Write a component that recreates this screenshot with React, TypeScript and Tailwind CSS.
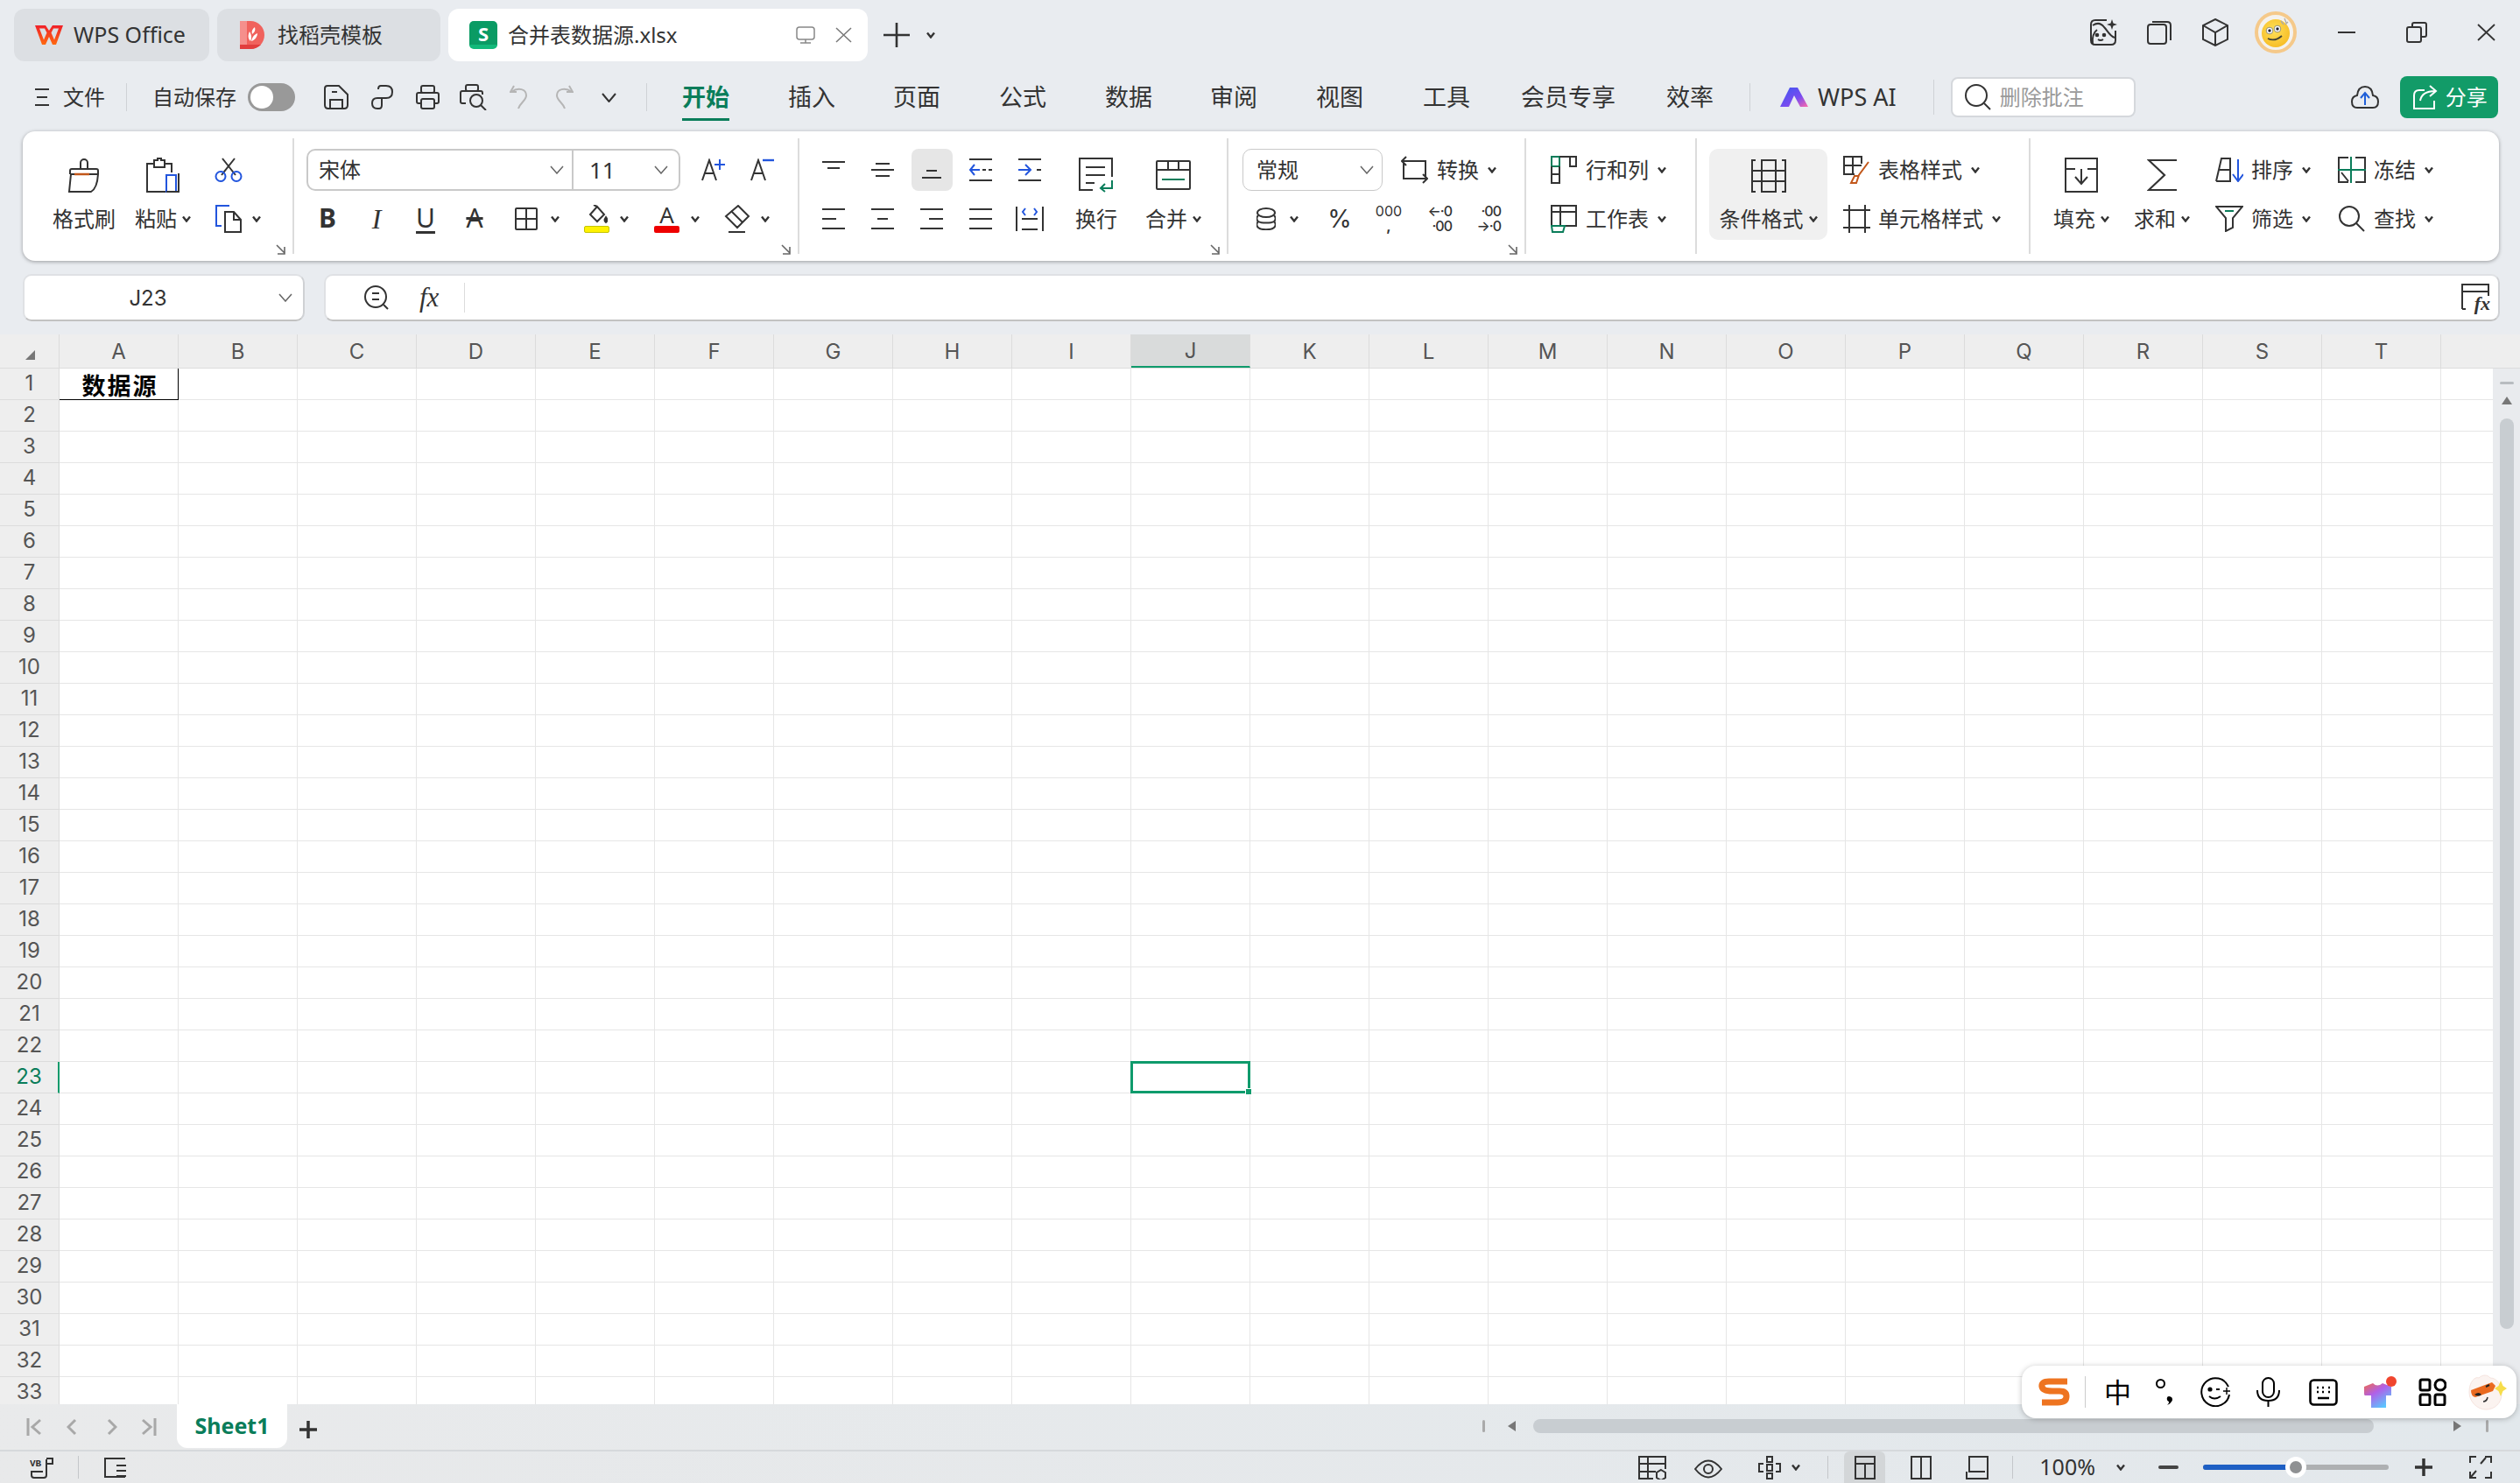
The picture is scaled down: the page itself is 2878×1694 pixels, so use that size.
import type { ReactNode } from "react";

const cols = "ABCDEFGHIJKLMNOPQRST".split("");
const rows = Array.from({ length: 33 }, (_, i) => i + 1);

type IconProps = { w: number; h: number; children: ReactNode; className?: string; sw?: number };

function Ic({ w, h, children, className = "", sw = 2 }: IconProps) {
  return (
    <svg
      width={w}
      height={h}
      viewBox={`0 0 ${w} ${h}`}
      fill="none"
      stroke="currentColor"
      strokeWidth={sw}
      className={`block shrink-0 ${className}`}
    >
      {children}
    </svg>
  );
}

function Chev({ className = "" }: { className?: string }) {
  return (
    <Ic w={10} h={8} sw={2.4} className={className}>
      <path d="M1 1.5 5 6.5 9 1.5" />
    </Ic>
  );
}

function ComboChev({ className = "" }: { className?: string }) {
  return (
    <Ic w={16} h={10} sw={1.5} className={`text-[#666] ${className}`}>
      <path d="M1 1 8 9 15 1" />
    </Ic>
  );
}

function Launcher() {
  return (
    <Ic w={11} h={12} sw={1.6} className="absolute bottom-[7px] right-[8px] text-[#666]">
      <path d="M1 1 10 10M10 3V11H2" />
    </Ic>
  );
}

function Sep() {
  return <div className="mt-[8px] h-[132px] w-[2px] shrink-0 bg-[#dcdcdc]" />;
}

function Big({ icon, label, chev, className = "" }: { icon: ReactNode; label: string; chev?: boolean; className?: string }) {
  return (
    <div className={`flex shrink-0 flex-col items-center ${className}`}>
      <div className="flex h-[40px] items-center justify-center">{icon}</div>
      <div className="mt-[14px] flex h-[32px] items-center gap-[6px] text-[24px] whitespace-nowrap">
        {label}
        {chev && <Chev />}
      </div>
    </div>
  );
}

function IconRow({ icon, label, className = "" }: { icon: ReactNode; label: string; className?: string }) {
  return (
    <div className={`flex h-[48px] items-center ${className}`}>
      <div className="flex w-[31px] justify-center">{icon}</div>
      <span className="ml-[9px] text-[24px] whitespace-nowrap">{label}</span>
      <Chev className="ml-[10px]" />
    </div>
  );
}

function AlignLines({ y, x }: { y: number[]; x: [number, number][] }) {
  return (
    <Ic w={28} h={26}>
      {y.map((v, i) => (
        <path key={i} d={`M${x[i][0]} ${v}H${x[i][1]}`} />
      ))}
    </Ic>
  );
}

function Slot56({ children, active }: { children: ReactNode; active?: boolean }) {
  return (
    <div className="flex h-[48px] w-[56px] shrink-0 items-center justify-center">
      <div className={`flex h-[48px] w-[47px] items-center justify-center rounded-[8px] ${active ? "bg-[#e6e6e6]" : ""}`}>
        {children}
      </div>
    </div>
  );
}

function TitleBar() {
  return (
    <div className="flex h-[72px] shrink-0 items-start pt-[10px] pl-[16px]">
      <div className="flex h-[60px] w-[223px] items-center rounded-[12px] bg-[#dcdfe3] pl-[24px]">
        <svg width="32" height="22" viewBox="0 0 32 22" className="block shrink-0">
          <defs>
            <linearGradient id="wpsG" x1="0" y1="0" x2="0" y2="1">
              <stop offset="0" stopColor="#f0202a" />
              <stop offset="1" stopColor="#ff6a10" />
            </linearGradient>
          </defs>
          <path
            fillRule="evenodd"
            d="M0 0H12L16 6 20 0H32L24 22H20L16 13 12 22H8ZM5 3.5 10 16.5 13.5 8.5 11 3.5ZM27 3.5H21L18.5 8.5 22 16.5Z"
            fill="url(#wpsG)"
          />
        </svg>
        <span className="ml-[12px] text-[25px]">WPS Office</span>
      </div>
      <div className="ml-[9px] flex h-[60px] w-[255px] items-center rounded-[12px] bg-[#dcdfe3] pl-[26px]">
        <svg width="28" height="32" viewBox="0 0 28 32" className="block shrink-0">
          <path d="M0 0H12C21 0 28 7 28 16S21 32 12 32H0Z" fill="#f0625d" />
          <path d="M0 0H8V27H0Z" fill="#f58f8c" />
          <path d="M0 27H24Q19 32 12 32H0Z" fill="#e23e3e" />
          <path d="M12 23C9 20 9 16 11 12 13 15 14 19 12 23ZM13 23C14 18 17 15 20 14 20 18 17 22 13 23ZM14 15C13 12 14 9 17 7 18 10 17 13 14 15Z" fill="#fff" />
        </svg>
        <span className="ml-[15px] text-[24px]">找稻壳模板</span>
      </div>
      <div className="ml-[9px] flex h-[60px] w-[479px] items-center rounded-[12px] bg-white pl-[24px]">
        <div className="flex h-[32px] w-[32px] items-center justify-center rounded-[5px] border-b-[5px] border-[#12b97a] bg-[#0a9b64] text-[22px] font-bold leading-none text-white">
          S
        </div>
        <span className="ml-[12px] text-[24px]">合并表数据源.xlsx</span>
        <Ic w={22} h={20} sw={1.5} className="ml-[135px] text-[#888]">
          <rect x="1" y="1" width="20" height="14" rx="3" />
          <path d="M11 15V19M5 19H17" />
        </Ic>
        <Ic w={19} h={18} sw={1.5} className="ml-[23px] text-[#777]">
          <path d="M1 1 18 17M18 1 1 17" />
        </Ic>
      </div>
      <Ic w={30} h={28} sw={2.6} className="mt-[16px] ml-[18px]">
        <path d="M15 0V28M0 14H30" />
      </Ic>
      <Chev className="mt-[26px] ml-[19px]" />
      <div className="ml-auto flex h-[54px] items-center">
        <Ic w={32} h={32}>
          <path d="M20 2H7Q2 2 2 7V25Q2 30 7 30H25Q30 30 30 25V14" />
          <path d="M4 8C10 4 14 6 17 10 21 14 23 20 29 22" />
          <path d="M4 30C3 22 5 16 9 13" />
          <circle cx="9" cy="19" r="1.3" fill="currentColor" />
          <circle cx="17" cy="19" r="1.3" fill="currentColor" />
          <path d="M10 24Q13 26 16 24" />
          <path d="M26 1 27.5 5.5 32 7 27.5 8.5 26 13 24.5 8.5 20 7 24.5 5.5Z" fill="currentColor" stroke="none" />
        </Ic>
        <Ic w={28} h={28} className="ml-[34px]">
          <rect x="1" y="5" width="21" height="22" rx="3" />
          <path d="M6 2H23Q27 2 27 6V23" />
        </Ic>
        <Ic w={30} h={32} className="ml-[35px]">
          <path d="M15 1 29 8V24L15 31 1 24V8Z" />
          <path d="M1 8 15 16 29 8M15 16V31" />
        </Ic>
        <svg width="48" height="48" viewBox="0 0 48 48" className="ml-[30px] block shrink-0">
          <defs>
            <radialGradient id="faceG" cx="0.45" cy="0.4" r="0.7">
              <stop offset="0" stopColor="#ffe15a" />
              <stop offset="1" stopColor="#f6b81e" />
            </radialGradient>
          </defs>
          <circle cx="24" cy="24" r="22" fill="#f4f2ee" stroke="#f5c98a" strokeWidth="4" />
          <circle cx="24" cy="25" r="16" fill="url(#faceG)" />
          <circle cx="17" cy="22" r="3.8" fill="#fff" stroke="#776" strokeWidth="0.8" />
          <circle cx="26" cy="20" r="3.8" fill="#fff" stroke="#776" strokeWidth="0.8" />
          <circle cx="17" cy="22" r="1.7" fill="#223" />
          <circle cx="26" cy="20" r="1.7" fill="#223" />
          <path d="M15 31Q23 35 31 28" fill="none" stroke="#443" strokeWidth="1.8" />
          <path d="M30 11 33 15M34 8 36 13M38 12 35 15" stroke="#aaa" strokeWidth="1.3" />
        </svg>
        <Ic w={20} h={4} className="ml-[47px]">
          <path d="M0 2H20" />
        </Ic>
        <Ic w={24} h={24} className="ml-[58px]">
          <rect x="1" y="6" width="16" height="17" rx="2" />
          <path d="M7 6V3Q7 1 9 1H21Q23 1 23 3V15Q23 17 21 17H17" />
        </Ic>
        <Ic w={21} h={20} sw={1.8} className="mr-[28px] ml-[57px]">
          <path d="M1 1 20 19M20 1 1 19" />
        </Ic>
      </div>
    </div>
  );
}

const menuItems = [
  { label: "插入", cls: "ml-[67px]" },
  { label: "页面", cls: "ml-[66px]" },
  { label: "公式", cls: "ml-[67px]" },
  { label: "数据", cls: "ml-[67px]" },
  { label: "审阅", cls: "ml-[66px]" },
  { label: "视图", cls: "ml-[67px]" },
  { label: "工具", cls: "ml-[68px]" },
  { label: "会员专享", cls: "ml-[58px]" },
  { label: "效率", cls: "ml-[58px]" },
];

function MenuBar() {
  return (
    <div className="flex h-[78px] shrink-0 items-center pl-[40px]">
      <Ic w={16} h={22}>
        <path d="M0 2H16M2 11H14M0 20H16" />
      </Ic>
      <span className="ml-[16px] text-[24px]">文件</span>
      <div className="ml-[24px] h-[32px] w-[1px] bg-[#cfd2d6]" />
      <span className="ml-[29px] text-[24px]">自动保存</span>
      <div className="ml-[13px] flex h-[32px] w-[54px] items-center rounded-full bg-[#999] pl-[3px]">
        <div className="h-[26px] w-[26px] rounded-full bg-white" />
      </div>
      <Ic w={28} h={28} className="ml-[33px]">
        <path d="M4 1H17L27 11V23Q27 27 23 27H5Q1 27 1 23V4Q1 1 4 1Z" />
        <path d="M7 27V17H21V27M9 8H15" />
      </Ic>
      <Ic w={25} h={28} className="ml-[26px]">
        <path d="M12 19V15H17Q24 15 24 8T17 1H11Q8 1 8 5" />
        <path d="M12 15H7Q1 15 1 21T7 27H9Q12 27 12 23V19" />
      </Ic>
      <Ic w={27} h={28} className="ml-[26px]">
        <rect x="6" y="1" width="15" height="8" rx="2" />
        <path d="M6 21H3Q1 21 1 19V11Q1 9 3 9H24Q26 9 26 11V19Q26 21 24 21H21" />
        <rect x="6" y="16" width="15" height="11" rx="2" />
      </Ic>
      <Ic w={31} h={30} className="ml-[23px]">
        <rect x="7" y="1" width="14" height="7" rx="2" />
        <path d="M7 22H3Q1 22 1 20V10Q1 8 3 8H24Q26 8 26 10V12" />
        <circle cx="19" cy="19" r="7" />
        <path d="M24 24 30 30" />
      </Ic>
      <Ic w={20} h={28} className="ml-[26px] text-[#b5b5b5]">
        <path d="M5 1 1 8 8 8" />
        <path d="M2 8C10 2 19 5 19 12 19 18 12 20 10 27" />
      </Ic>
      <Ic w={21} h={28} className="ml-[32px] text-[#b5b5b5]">
        <path d="M16 1 20 8 13 8" />
        <path d="M19 8C11 2 2 5 2 12 2 18 9 20 11 27" />
      </Ic>
      <Ic w={17} h={11} className="ml-[32px]">
        <path d="M1 1 8.5 10 16 1" />
      </Ic>
      <div className="ml-[34px] h-[32px] w-[1px] bg-[#cfd2d6]" />
      <div className="ml-[40px] flex h-[54px] items-center border-b-[3px] border-[#0a7d5a] pt-[3px] text-[27px] font-bold text-[#0a7d5a]">
        开始
      </div>
      {menuItems.map((m) => (
        <span key={m.label} className={`text-[27px] ${m.cls}`}>
          {m.label}
        </span>
      ))}
      <div className="ml-[41px] h-[32px] w-[1px] bg-[#cfd2d6]" />
      <svg width="32" height="22" viewBox="0 0 32 22" className="ml-[34px] block shrink-0">
        <defs>
          <linearGradient id="aiG" x1="0" y1="0" x2="1" y2="1">
            <stop offset="0" stopColor="#3a57f0" />
            <stop offset="0.6" stopColor="#7a4cf0" />
            <stop offset="1" stopColor="#ff6aa8" />
          </linearGradient>
        </defs>
        <path d="M11 0H20L32 22H23L16 9 10 22H0Z" fill="url(#aiG)" />
      </svg>
      <span className="ml-[11px] text-[27px]">WPS AI</span>
      <div className="ml-[42px] h-[40px] w-[1px] bg-[#cfd2d6]" />
      <div className="ml-[19px] flex h-[46px] w-[211px] items-center rounded-[8px] border-2 border-[#d5d8dc] bg-white pl-[14px]">
        <Ic w={30} h={30}>
          <circle cx="13" cy="13" r="12" />
          <path d="M22 22 29 29" />
        </Ic>
        <span className="ml-[10px] text-[24px] text-[#9a9a9a]">删除批注</span>
      </div>
      <Ic w={32} h={28} className="ml-[246px]">
        <path d="M8 26H7Q1 26 1 19 1 13 7 12 8 2 16 2T25 12Q31 13 31 19 31 26 25 26H8Z" />
        <path d="M16 23V10M11 15 16 9 21 15" stroke="#1f5fd8" />
      </Ic>
      <div className="mr-[24px] ml-[24px] flex h-[48px] w-[112px] items-center rounded-[8px] bg-[#129b68] pl-[15px] text-white">
        <Ic w={28} h={28}>
          <path d="M13 6H7Q1 6 1 12V27H24V18" />
          <path d="M8 18Q10 7 25 7M19 1 26 7 19 13" />
        </Ic>
        <span className="ml-[9px] text-[24px]">分享</span>
      </div>
    </div>
  );
}

function Ribbon() {
  return (
    <div className="mr-[24px] ml-[26px] flex h-[148px] shrink-0 rounded-[14px] bg-white shadow-[0_1px_4px_rgba(0,0,0,0.35)]">
      {/* clipboard */}
      <div className="relative flex w-[308px] shrink-0 pt-[30px]">
        <Big
          className="ml-[34px] w-[72px]"
          label="格式刷"
          icon={
            <Ic w={36} h={40}>
              <path d="M14 13V6A4 4 0 0 1 22 6V13" />
              <path d="M2 19V15Q2 13 4 13H32Q34 13 34 15V19" />
              <path d="M3 19 1 39H26Q33 35 34 19Z" />
              <path d="M7 19H24" stroke="#c2571a" strokeWidth={2.5} />
            </Ic>
          }
        />
        <Big
          className="ml-[22px] w-[64px]"
          label="粘贴"
          chev
          icon={
            <Ic w={40} h={40}>
              <path d="M11 7H2V39H24" />
              <path d="M30 17V7H21" />
              <path d="M10 11V3H14V1H18V3H22V11Z" />
              <rect x="24" y="20" width="11" height="19" stroke="#2255dd" />
              <path d="M38 18V39H24" />
            </Ic>
          }
        />
        <div className="ml-[27px] flex flex-col">
          <Ic w={32} h={28} className="h-[28px]">
            <path d="M9 1 24 20M23 1 8 20" />
            <circle cx="7" cy="21.5" r="5.5" stroke="#2255dd" />
            <circle cx="25" cy="21.5" r="5.5" stroke="#2255dd" />
          </Ic>
          <div className="mt-[26px] flex h-[32px] items-center">
            <Ic w={32} h={32}>
              <path d="M17 1H2V24H8" stroke="#2255dd" />
              <path d="M12 8H22L30 17V31H12Z" />
              <path d="M22 8V17H30" />
            </Ic>
            <Chev className="ml-[11px]" />
          </div>
        </div>
        <Launcher />
      </div>
      <Sep />
      {/* font */}
      <div className="relative w-[575px] shrink-0 pt-[20px]">
        <div className="flex h-[48px] items-center">
          <div className="ml-[14px] flex h-[48px] w-[427px] items-center rounded-[10px] border-2 border-[#c9c9c9] pl-[12px] text-[24px]">
            <span className="w-[264px]">宋体</span>
            <ComboChev />
            <div className="ml-[9px] h-full w-[2px] bg-[#c9c9c9]" />
            <span className="ml-[18px] w-[74px] text-[26px]">11</span>
            <ComboChev />
          </div>
          <Ic w={28} h={26} className="ml-[24px]">
            <path d="M1 25 9 2 17 25M4 17H14" />
            <path d="M21 1V13M15 7H27" stroke="#2255dd" />
          </Ic>
          <Ic w={28} h={26} className="ml-[28px]">
            <path d="M1 25 9 2 17 25M4 17H14" />
            <path d="M14 2H27" stroke="#2255dd" strokeWidth={2.4} />
          </Ic>
        </div>
        <div className="mt-[8px] flex h-[48px] items-center">
          <div className="ml-[10px] flex w-[224px] shrink-0 text-[30px] leading-none">
            <span className="w-[56px] text-center font-bold">B</span>
            <span className="w-[56px] text-center font-['Liberation_Serif',serif] text-[32px] italic">I</span>
            <span className="w-[56px] text-center underline underline-offset-4">U</span>
            <span className="w-[56px] text-center line-through">A</span>
          </div>
          <Ic w={26} h={26} className="ml-[18px]">
            <rect x="1" y="1" width="24" height="24" rx="1" />
            <path d="M13 1V25M1 13H25" />
          </Ic>
          <Chev className="ml-[15px]" />
          <div className="ml-[28px] flex w-[29px] flex-col items-center">
            <Ic w={24} h={22}>
              <path d="M12 2 4 11 12 19 20 11 12 2ZM12 2 8 0" />
              <path d="M22 14Q25 18 22 20 19 18 22 14Z" fill="currentColor" />
            </Ic>
            <div className="mt-[2px] h-[8px] w-[29px] rounded-[2px] border border-[#c4c400] bg-[#fff200]" />
          </div>
          <Chev className="ml-[12px]" />
          <div className="ml-[29px] flex w-[29px] flex-col items-center">
            <span className="h-[22px] text-[26px] leading-[22px]">A</span>
            <div className="mt-[2px] h-[8px] w-[29px] rounded-[2px] bg-[#ee0000]" />
          </div>
          <Chev className="ml-[13px]" />
          <Ic w={30} h={32} className="ml-[28px]">
            <path d="M16 1 28 13 15 26 2 13Z" />
            <path d="M8 7 21 20" />
            <path d="M5 31H24" />
          </Ic>
          <Chev className="ml-[12px]" />
        </div>
        <Launcher />
      </div>
      <Sep />
      {/* alignment */}
      <div className="relative flex w-[488px] shrink-0 pt-[20px]">
        <div className="ml-[11px] w-[280px] shrink-0">
          <div className="flex h-[48px] items-center">
            <Slot56>
              <Ic w={28} h={16} className="mb-[6px]">
                <path d="M1 2H27M7 9H21" />
              </Ic>
            </Slot56>
            <Slot56>
              <AlignLines y={[6, 13, 20]} x={[[6, 22], [1, 27], [6, 22]]} />
            </Slot56>
            <Slot56 active>
              <Ic w={24} h={16} className="mt-[14px]">
                <path d="M6 2H18M1 10H23" />
              </Ic>
            </Slot56>
            <Slot56>
              <Ic w={28} h={26}>
                <path d="M1 1H27M16 13H20M23 13H27M1 25H27" />
                <path d="M13 13H2M7 7 2 13 7 19" stroke="#2255dd" />
              </Ic>
            </Slot56>
            <Slot56>
              <Ic w={28} h={26}>
                <path d="M1 1H27M22 13H27M1 25H27" />
                <path d="M1 13H14M9 7 15 13 9 19" stroke="#2255dd" />
              </Ic>
            </Slot56>
          </div>
          <div className="mt-[8px] flex h-[48px] items-center">
            <Slot56>
              <AlignLines y={[2, 13, 24]} x={[[1, 27], [1, 17], [1, 27]]} />
            </Slot56>
            <Slot56>
              <AlignLines y={[2, 13, 24]} x={[[1, 27], [8, 20], [1, 27]]} />
            </Slot56>
            <Slot56>
              <AlignLines y={[2, 13, 24]} x={[[1, 27], [11, 27], [1, 27]]} />
            </Slot56>
            <Slot56>
              <AlignLines y={[2, 13, 24]} x={[[1, 27], [1, 27], [1, 27]]} />
            </Slot56>
            <Slot56>
              <Ic w={32} h={28}>
                <path d="M1 0V28M31 0V28M7 14H25M7 26H25" />
                <path d="M11 2 8 6 11 10M21 2 24 6 21 10" stroke="#2255dd" />
              </Ic>
            </Slot56>
          </div>
        </div>
        <div className="flex flex-col pt-[10px]">
          <Big
            className="ml-[8px] w-[80px]"
            label="换行"
            icon={
              <Ic w={40} h={40}>
                <path d="M38 22V1H1V37H16" />
                <path d="M8 11H30M8 20H30M8 29H18" />
                <path d="M38 26V35H26M30 30 25 35 30 39" stroke="#0a7d5a" />
              </Ic>
            }
          />
        </div>
        <div className="flex flex-col pt-[10px]">
          <Big
            className="ml-[3px] w-[90px]"
            label="合并"
            chev
            icon={
              <Ic w={40} h={34}>
                <rect x="1" y="1" width="38" height="32" rx="1" />
                <path d="M1 11H39M14 1V11M26 1V11" />
                <path d="M7 22H33" stroke="#0a7d5a" />
              </Ic>
            }
          />
        </div>
        <Launcher />
      </div>
      <Sep />
      {/* number */}
      <div className="relative w-[338px] shrink-0 pt-[20px]">
        <div className="flex h-[48px] items-center">
          <div className="ml-[16px] flex h-[48px] w-[160px] items-center rounded-[10px] border border-[#c9c9c9] pl-[15px] text-[24px]">
            <span className="w-[118px]">常规</span>
            <ComboChev />
          </div>
          <Ic w={31} h={32} className="ml-[21px]">
            <path d="M6 1 1 6 6 11M1 6H28V24" />
            <path d="M25 31 30 26 25 21M30 26H3V8" />
          </Ic>
          <span className="ml-[10px] text-[24px]">转换</span>
          <Chev className="ml-[10px]" />
        </div>
        <div className="mt-[8px] flex h-[48px] items-center">
          <Ic w={22} h={26} className="ml-[32px]">
            <ellipse cx="11" cy="6" rx="10" ry="5" />
            <path d="M2 9C0 11 0 14 2 16 5 18 17 18 20 16 22 14 22 11 20 9" />
            <path d="M2 16C0 18 0 21 2 23 5 26 17 26 20 23 22 21 22 18 20 16" />
          </Ic>
          <Chev className="ml-[16px]" />
          <div className="ml-[19px] flex h-[48px] w-[224px] items-center font-['Inter',sans-serif] text-[16px]">
            <span className="w-[56px] text-center text-[28px] leading-none font-normal">%</span>
            <span className="flex h-[34px] w-[56px] flex-col items-center leading-[17px]">
              <span>000</span>
              <span className="font-bold">,</span>
            </span>
            <span className="flex h-[34px] w-[56px] flex-col items-center leading-[17px] tracking-[-1px]">
              <span className="w-[32px] text-right font-medium">←·0</span>
              <span className="w-[32px] text-right font-medium">·00</span>
            </span>
            <span className="flex h-[34px] w-[56px] flex-col items-center leading-[17px] tracking-[-1px]">
              <span className="w-[32px] text-right font-medium">·00</span>
              <span className="w-[32px] text-right font-medium">→·0</span>
            </span>
          </div>
        </div>
        <Launcher />
      </div>
      <Sep />
      {/* cells */}
      <div className="w-[193px] shrink-0 pt-[20px] pl-[28px]">
        <div className="flex h-[48px] items-center">
          <Ic w={30} h={32}>
            <rect x="1" y="1" width="9" height="11" stroke="#0a7d5a" />
            <path d="M10 1H29V12H22V1M1 12V31H10V12M1 21H10" />
          </Ic>
          <span className="ml-[10px] text-[24px]">行和列</span>
          <Chev className="ml-[10px]" />
        </div>
        <div className="mt-[8px] flex h-[48px] items-center">
          <Ic w={30} h={32}>
            <path d="M1 23V1H29V24H14M1 8H29M11 1V23" />
            <path d="M1 24H16L14 31H2Z" stroke="#0a7d5a" />
          </Ic>
          <span className="ml-[10px] text-[24px]">工作表</span>
          <Chev className="ml-[10px]" />
        </div>
      </div>
      <Sep />
      {/* styles */}
      <div className="flex w-[379px] shrink-0 pt-[20px]">
        <div className="ml-[14px] flex h-[104px] w-[135px] shrink-0 flex-col items-center rounded-[10px] bg-[#f0f0f0] pt-[12px]">
          <Ic w={40} h={38}>
            <path d="M5 1H1V37H5M35 1H39V37H35" />
            <path d="M12 1H28V13H12ZM1 13H12M28 13H39M12 13V25H28V13M1 25H12M28 25H39M12 25V37H28V25" />
          </Ic>
          <div className="mt-[14px] flex h-[32px] items-center gap-[6px] text-[24px]">
            条件格式
            <Chev />
          </div>
        </div>
        <div className="ml-[18px]">
          <IconRow
            label="表格样式"
            icon={
              <Ic w={31} h={32}>
                <path d="M21 9V1H1V21H13M1 11H21M11 1V21" />
                <path d="M29 7 18 22 15 31H9L13 23H18" stroke="#c2571a" />
              </Ic>
            }
          />
          <IconRow
            className="mt-[8px]"
            label="单元格样式"
            icon={
              <Ic w={31} h={32}>
                <path d="M7 0V32M25 0V32M0 6H31M0 26H31" />
              </Ic>
            }
          />
        </div>
      </div>
      <Sep />
      {/* editing */}
      <div className="flex shrink-0 pt-[30px]">
        <Big
          className="ml-[18px] w-[80px]"
          label="填充"
          chev
          icon={
            <Ic w={38} h={40}>
              <rect x="1" y="1" width="36" height="38" />
              <path d="M1 13H12M26 13H37" />
              <path d="M19 13V29M12 22 19 30 26 22" />
            </Ic>
          }
        />
        <Big
          className="ml-[12px] w-[80px]"
          label="求和"
          chev
          icon={
            <Ic w={34} h={36} sw={2.2}>
              <path d="M34 1H2L20 18 2 35H34" />
            </Ic>
          }
        />
        <div className="-mt-[10px]">
          <div className="ml-[21px] flex h-[48px] items-center">
            <Ic w={32} h={28}>
              <path d="M1 27 7 1H17V27H1M5 14H17" />
              <path d="M26 2V26M20 19 26 27 32 19" stroke="#2255dd" />
            </Ic>
            <span className="ml-[9px] text-[24px]">排序</span>
            <Chev className="ml-[10px]" />
          </div>
          <div className="mt-[8px] ml-[21px] flex h-[48px] items-center">
            <Ic w={32} h={30}>
              <path d="M1 1H31L20 14V25L12 29V14Z" />
              <path d="M11 6H21" stroke="#0a7d5a" />
            </Ic>
            <span className="ml-[9px] text-[24px]">筛选</span>
            <Chev className="ml-[10px]" />
          </div>
        </div>
        <div className="-mt-[10px]">
          <div className="ml-[31px] flex h-[48px] items-center">
            <Ic w={32} h={30}>
              <path d="M12 1H1V29H12M20 1H31V29H20M1 15H2M4 18 12 28" />
              <path d="M15 0V30M0 15H32" stroke="#0a7d5a" />
            </Ic>
            <span className="ml-[9px] text-[24px]">冻结</span>
            <Chev className="ml-[10px]" />
          </div>
          <div className="mt-[8px] ml-[31px] flex h-[48px] items-center">
            <Ic w={32} h={30}>
              <circle cx="13" cy="12" r="11" />
              <path d="M21 20 30 29" />
            </Ic>
            <span className="ml-[9px] text-[24px]">查找</span>
            <Chev className="ml-[10px]" />
          </div>
        </div>
      </div>
    </div>
  );
}

function FormulaBar() {
  return (
    <div className="mt-[15px] mr-[23px] ml-[26px] flex h-[54px] shrink-0 gap-[22px]">
      <div className="flex w-[322px] items-center rounded-[10px] border-2 border-t-[#dfe1e4] border-r-[#cfd1d4] border-b-[#c2c2c2] border-l-[#dfe1e4] bg-white">
        <span className="w-[282px] pt-[2px] text-center font-['Inter',sans-serif] text-[24px]">J23</span>
        <ComboChev className="ml-[8px]" />
      </div>
      <div className="flex flex-1 items-center rounded-[10px] border-2 border-t-[#dfe1e4] border-r-[#cfd1d4] border-b-[#c2c2c2] border-l-[#dfe1e4] bg-white pl-[44px]">
        <Ic w={28} h={28}>
          <circle cx="13" cy="13" r="12" />
          <path d="M22 22 27 27M9 9H17M9 16H17" />
        </Ic>
        <span className="ml-[35px] w-[27px] font-['Liberation_Serif',serif] text-[31px] italic">fx</span>
        <div className="ml-[24px] h-[34px] w-[1px] bg-[#dcdcdc]" />
        <div className="relative mr-[10px] ml-auto h-[32px] w-[32px]">
          <Ic w={32} h={32}>
            <path d="M1 29V1H31V14M1 9H31M1 29H5" />
          </Ic>
          <span className="absolute -right-[1px] -bottom-[2px] font-['Liberation_Serif',serif] text-[22px] leading-none font-bold italic">
            fx
          </span>
        </div>
      </div>
    </div>
  );
}

function Grid() {
  return (
    <div className="mt-[15px] flex min-h-0 flex-1 flex-col overflow-hidden font-['Inter',sans-serif]">
      <div className="flex h-[39px] shrink-0 border-b border-[#dcdcdc] bg-[#eeeeee]">
        <div className="flex w-[68px] shrink-0 items-center justify-center border-r border-[#dcdcdc] pt-[8px] pl-[2px]">
          <div className="h-0 w-0 border-b-[11px] border-l-[11px] border-b-[#777] border-l-transparent" />
        </div>
        {cols.map((c) => (
          <div
            key={c}
            className={`flex w-[136px] shrink-0 items-center justify-center border-r border-[#dcdcdc] pt-[2px] text-[24px] text-[#555] ${
              c === "J" ? "border-b-2 border-b-[#0f9b6c] bg-[#d9dbdb] text-[#333]" : ""
            }`}
          >
            {c}
          </div>
        ))}
      </div>
      <div className="flex min-h-0 flex-1">
        <div className="min-w-0 flex-1 overflow-hidden bg-white">
          {rows.map((r) => (
            <div key={r} className="flex h-[36px]">
              <div
                className={`flex w-[68px] shrink-0 items-center justify-center border-r border-b border-[#dcdcdc] bg-[#eeeeee] pb-[1px] text-[24px] leading-none ${
                  r === 23 ? "border-r-2 border-r-[#0f9b6c] bg-[#d9dbdb] text-[#0a7d5a]" : "text-[#555]"
                }`}
              >
                {r}
              </div>
              {cols.map((c) => (
                <div
                  key={c}
                  className={`relative flex w-[136px] shrink-0 items-center justify-center border-r border-b ${
                    r === 1 && c === "A" ? "border-black" : "border-[#e6e6e6]"
                  }`}
                >
                  {r === 1 && c === "A" && (
                    <span className="pt-[2px] pl-[3px] font-['Noto_Sans_CJK_SC',sans-serif] text-[27px] leading-none font-bold tracking-[2px] text-black">
                      数据源
                    </span>
                  )}
                  {r === 23 && c === "J" && (
                    <div className="absolute -top-[1px] -left-[1px] z-10 h-[37px] w-[137px] border-[3px] border-[#0f9b6c]">
                      <div className="absolute -right-[4px] -bottom-[4px] h-[6px] w-[6px] bg-[#0f9b6c] outline outline-white" />
                    </div>
                  )}
                </div>
              ))}
              <div className="flex-1 border-b border-[#e6e6e6]" />
            </div>
          ))}
        </div>
        <div className="flex w-[31px] shrink-0 flex-col items-center bg-[#e9ebee] pt-[15px]">
          <div className="h-[3px] w-[16px] rounded-full bg-[#b8bcc0]" />
          <div className="mt-[14px] h-0 w-0 border-r-[6px] border-b-[9px] border-l-[6px] border-r-transparent border-b-[#777] border-l-transparent" />
          <div className="mt-[16px] h-[1040px] w-[16px] rounded-full bg-[#c8cdd1]" />
        </div>
      </div>
    </div>
  );
}

function SheetBar() {
  return (
    <div className="flex h-[52px] shrink-0 bg-linear-to-r from-[#e9eaeb] to-[#e2e8ec]">
      <div className="flex h-[20px] items-center self-center pl-[30px] text-[#a8a8a8]">
        <Ic w={18} h={20} sw={3}>
          <path d="M2 0V20M16 2 7 10 16 18" />
        </Ic>
        <Ic w={12} h={20} sw={3} className="ml-[28px]">
          <path d="M10 2 2 10 10 18" />
        </Ic>
        <Ic w={12} h={20} sw={3} className="ml-[34px]">
          <path d="M2 2 10 10 2 18" />
        </Ic>
        <Ic w={18} h={20} sw={3} className="ml-[27px]">
          <path d="M16 0V20M2 2 11 10 2 18" />
        </Ic>
      </div>
      <div className="ml-[23px] flex h-[50px] w-[126px] items-center justify-center rounded-b-[12px] bg-white text-[25px] font-bold text-[#0a7d5a]">
        Sheet1
      </div>
      <Ic w={20} h={20} sw={3.5} className="mt-[19px] ml-[14px]">
        <path d="M10 0V20M0 10H20" />
      </Ic>
      <div className="ml-auto flex items-center pb-[2px]">
        <div className="h-[14px] w-[3px] rounded-full bg-[#aaa]" />
        <div className="ml-[26px] h-0 w-0 border-t-[6px] border-r-[9px] border-b-[6px] border-t-transparent border-r-[#777] border-b-transparent" />
        <div className="ml-[20px] h-[16px] w-[960px] rounded-full bg-[#c8cdd1]" />
        <div className="ml-[91px] h-0 w-0 border-t-[6px] border-b-[6px] border-l-[9px] border-t-transparent border-b-transparent border-l-[#777]" />
        <div className="mr-[36px] ml-[28px] h-[14px] w-[3px] rounded-full bg-[#aaa]" />
      </div>
    </div>
  );
}

function StatusBar() {
  return (
    <div className="flex h-[38px] shrink-0 items-center border-t-2 border-[#d6d9dc] bg-linear-to-r from-[#e8e9ea] to-[#e3e8ec] pl-[34px]">
      <svg width="27" height="25" viewBox="0 0 27 25" fill="none" stroke="currentColor" strokeWidth="2" className="block shrink-0">
        <path d="M19 3V21Q19 24 16 24H5Q2 24 2 21V17H15" />
        <path d="M19 2H26V8H19" />
        <text x="0" y="11" fontSize="11" fontWeight="700" fill="currentColor" stroke="none" fontFamily="Liberation Mono">
          VB
        </text>
      </svg>
      <div className="ml-[28px] h-[26px] w-[1px] bg-[#c4c7ca]" />
      <Ic w={25} h={24} className="ml-[29px]">
        <path d="M24 2H1V23H24M14 10H25M14 16H25M14 22H25" />
      </Ic>
      <div className="ml-auto flex h-full items-center">
        <Ic w={32} h={27}>
          <path d="M17 26H1V1H31V15M1 9H31M1 18H20M11 1V26" />
          <path d="M26 16 31 19V25L26 28 21 25V19Z" />
        </Ic>
        <Ic w={32} h={27} className="ml-[32px]">
          <path d="M1 15Q16-4 31 15 16 34 1 15Z" />
          <circle cx="16" cy="15" r="5" />
        </Ic>
        <Ic w={26} h={27} className="ml-[41px]">
          <path d="M10 1H16V7H10ZM10 20H16V26H10ZM6 9H1V18H6M20 9H25V18H20M10 10H16V17H10Z" />
        </Ic>
        <Chev className="ml-[12px]" />
        <div className="ml-[31px] h-[26px] w-[1px] bg-[#c4c7ca]" />
        <div className="ml-[18px] flex h-full w-[47px] items-center justify-center rounded-t-[6px] bg-[#d3d6d8]">
          <Ic w={24} h={27}>
            <rect x="1" y="1" width="22" height="25" />
            <path d="M1 9H23M12 9V26" />
          </Ic>
        </div>
        <Ic w={24} h={27} className="ml-[29px]">
          <rect x="1" y="1" width="22" height="25" />
          <path d="M12 1V26" />
        </Ic>
        <Ic w={26} h={27} className="ml-[39px]">
          <path d="M20 1H4V18H22M20 1H25V26H1V18" />
        </Ic>
        <div className="ml-[27px] h-[26px] w-[1px] bg-[#c4c7ca]" />
        <span className="ml-[30px] text-[25px]">100%</span>
        <Chev className="ml-[24px]" />
        <div className="ml-[38px] h-[4px] w-[23px] rounded bg-[#444]" />
        <div className="relative ml-[28px] flex h-[6px] w-[212px] rounded-full bg-[#aeb0b2]">
          <div className="h-full w-[106px] rounded-full bg-[#1e5fc4]" />
          <div className="absolute top-1/2 left-[94px] flex h-[24px] w-[24px] -translate-y-1/2 items-center justify-center rounded-full bg-white">
            <div className="h-[14px] w-[14px] rounded-full bg-[#8f9193]" />
          </div>
        </div>
        <Ic w={20} h={20} sw={3.5} className="ml-[30px]">
          <path d="M10 0V20M0 10H20" />
        </Ic>
        <Ic w={26} h={26} className="mr-[32px] ml-[42px]">
          <path d="M1 8V1H8M18 1H25V8M1 18V25H8M18 25H25V18M19 2 13 9M2 24 8 17" />
        </Ic>
      </div>
    </div>
  );
}

function ImeBar() {
  return (
    <div className="absolute top-[1560px] right-[4px] flex h-[60px] w-[565px] items-center rounded-[16px] bg-white pl-[19px] shadow-[0_1px_6px_rgba(0,0,0,0.25)]">
      <svg width="36" height="32" viewBox="0 0 36 32" fill="none" stroke="#ee7420" strokeWidth="7" className="block shrink-0">
        <path d="M33 4H12Q3 4 4 10 5 15 16 15H24Q32 15 32 21 32 28 22 28H4" />
      </svg>
      <div className="ml-[17px] h-[36px] w-[1px] bg-[#ccc]" />
      <span className="ml-[21px] w-[30px] text-[31px] leading-none text-black">中</span>
      <Ic w={21} h={30} className="ml-[29px] text-black">
        <circle cx="5.5" cy="5.5" r="4.5" />
        <path d="M15 20C19 20 20 24 18 26 17 28 15 29 13 30 15 28 15 27 15 26 12 25 12 20 15 20Z" fill="currentColor" stroke="none" />
      </Ic>
      <Ic w={35} h={34} className="ml-[30px] text-black">
        <path d="M32 11A16 16 0 1 0 33 20" />
        <circle cx="11" cy="14" r="1.6" fill="currentColor" />
        <path d="M18 14H22M10 22Q16 27 23 22" />
        <path d="M30 12V20M26 16H34" strokeWidth={1.4} />
      </Ic>
      <Ic w={27} h={34} className="ml-[29px] text-black">
        <rect x="7" y="1" width="13" height="22" rx="6.5" />
        <path d="M1 15Q1 27 13.5 27T26 15M13.5 27V34" />
      </Ic>
      <Ic w={33} h={31} sw={2.6} className="ml-[33px] text-black">
        <rect x="1.5" y="1.5" width="30" height="28" rx="4" />
        <path d="M9 10H11M15 10H17M22 10H24M9 15H11M15 15H17M22 15H24M10 22H23" />
      </Ic>
      <svg width="39" height="36" viewBox="0 0 39 36" className="ml-[30px] block shrink-0">
        <defs>
          <linearGradient id="shirtG" x1="0" y1="0" x2="0.7" y2="1">
            <stop offset="0" stopColor="#f06a4c" />
            <stop offset="0.45" stopColor="#b060e8" />
            <stop offset="1" stopColor="#58c8ff" />
          </linearGradient>
        </defs>
        <path d="M0 12 10 8Q15 13 21 8L31 12V22H25V36H8V22H1Q0 22 0 20Z" fill="url(#shirtG)" />
        <circle cx="31" cy="6" r="6" fill="#f0452e" />
      </svg>
      <Ic w={32} h={32} sw={3} className="ml-[23px] text-black">
        <rect x="2" y="2" width="11" height="12" rx="2" />
        <circle cx="25" cy="8" r="6" />
        <rect x="2" y="19" width="11" height="12" rx="2" />
        <rect x="19" y="19" width="11" height="12" rx="2" />
      </Ic>
      <svg width="44" height="44" viewBox="0 0 44 44" className="ml-[25px] block shrink-0">
        <path d="M1 22C1 10 8 4 12 6 16 2 22 2 25 6 33 6 38 14 38 24 38 35 30 42 20 42S1 33 1 22Z" fill="#fbf3f0" stroke="#f6e4df" />
        <path d="M3 20 27 11 31 15 28 21 8 28Q3 27 3 20Z" fill="#ea6a20" />
        <path d="M7 25Q12 21 15 25 12 28 7 25Z" fill="#222" />
        <path d="M20 16 24 14" stroke="#222" strokeWidth="2" />
        <path d="M17 33Q21 33 22 28" stroke="#333" strokeWidth="1.6" fill="none" />
        <path d="M37 9 39.5 15 44 18 39.5 21 37 27 34.5 21 30 18 34.5 15Z" fill="#f6dd4b" />
      </svg>
    </div>
  );
}

export default function App() {
  return (
    <div className="relative flex h-screen w-screen flex-col overflow-hidden bg-[#e9ecf0] font-['Noto_Sans','Noto_Sans_CJK_SC',sans-serif] text-[#333]">
      <TitleBar />
      <MenuBar />
      <Ribbon />
      <FormulaBar />
      <Grid />
      <SheetBar />
      <StatusBar />
      <ImeBar />
    </div>
  );
}
